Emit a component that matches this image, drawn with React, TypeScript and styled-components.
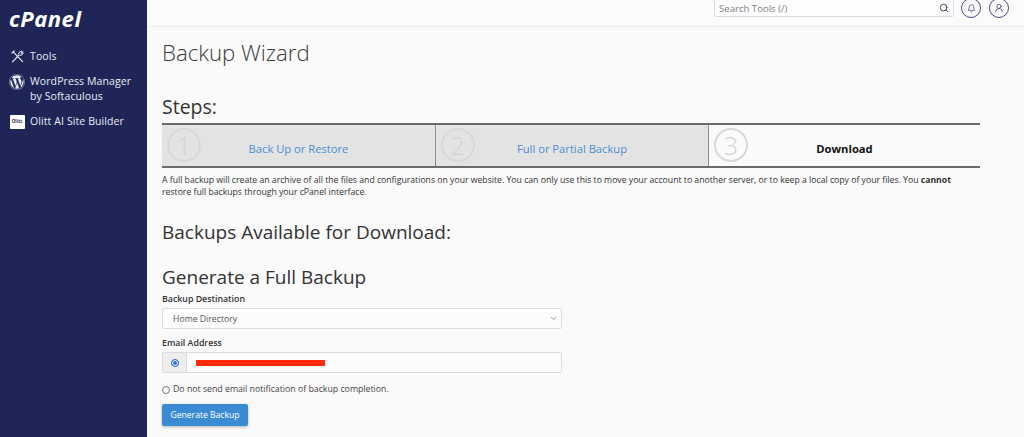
import { createGlobalStyle, styled } from "styled-components";
import { FaWordpress } from "react-icons/fa";
import { Search, Bell, UserRound, ChevronDown } from "lucide-react";

const GlobalStyle = createGlobalStyle`
    html, body {
        margin: 0;
        padding: 0;
        height: 100%;
        overflow: hidden;
        background: #fafafa;
    }
    * {
        box-sizing: border-box;
    }
`;

const Page = styled.div`
    display: flex;
    width: 1024px;
    height: 437px;
    overflow: hidden;
    font-family: "Open Sans", "Liberation Sans", sans-serif;
    color: #333;
    background: #fafafa;
`;

const Sidebar = styled.nav`
    flex: 0 0 147px;
    background: #1f2657;
    color: #e8eaf2;
    padding: 7px 0 0 9px;
    display: flex;
    flex-direction: column;
`;

const Logo = styled.div`
    font-style: italic;
    font-weight: 700;
    font-size: 22px;
    line-height: 22px;
    letter-spacing: 0.55px;
    color: #fff;
    margin-bottom: 20px;
`;

const NavItem = styled.div<{ $gap: number }>`
    display: flex;
    align-items: flex-start;
    gap: 5px;
    font-size: 10.5px;
    line-height: 15px;
    letter-spacing: 0.1px;
    margin-bottom: ${(props) => props.$gap}px;
`;

const NavIcon = styled.span`
    flex: 0 0 16px;
    height: 15px;
    display: flex;
    align-items: center;
    justify-content: center;
`;

const OlittBadge = styled.span`
    width: 15px;
    height: 14px;
    background: #fff;
    color: #1f2657;
    border-radius: 1px;
    font-size: 4.5px;
    font-weight: 700;
    display: flex;
    align-items: center;
    justify-content: center;
`;

const Column = styled.div`
    flex: 1;
    min-width: 0;
    display: flex;
    flex-direction: column;
`;

const TopBar = styled.header`
    height: 27px;
    flex: none;
    display: flex;
    justify-content: flex-end;
    align-items: flex-start;
    gap: 8px;
    padding-right: 15px;
    background: #fbfbfb;
    border-bottom: 1px solid #eeeeee;
`;

const SearchBox = styled.div`
    width: 240px;
    height: 18px;
    margin: -1px -1px 0 0;
    display: flex;
    align-items: center;
    justify-content: space-between;
    padding: 0 4px;
    border: 1px solid #d9dbe6;
    border-radius: 2px;
    background: #fdfdfd;
    font-size: 9.6px;
    color: #7d7f88;
`;

const RoundButton = styled.span`
    width: 20px;
    height: 20px;
    margin-top: -2px;
    border: 1px solid #464d7b;
    border-radius: 50%;
    display: flex;
    align-items: center;
    justify-content: center;
    color: #464d7b;
`;

const Main = styled.main`
    flex: 1;
    padding: 12px 44px 0 15px;
`;

const PageTitle = styled.h1`
    margin: 0 0 27px;
    font-size: 22.2px;
    line-height: 28px;
    font-weight: 300;
    color: #3a3a3a;
`;

const StepsTitle = styled.h2`
    margin: 0 0 3px;
    font-size: 19.5px;
    line-height: 26px;
    font-weight: 400;
    color: #333;
`;

const Stepper = styled.div`
    display: grid;
    grid-template-columns: 273px 273px 1fr;
    height: 45px;
    border-top: 2px solid #6b6b6b;
    border-bottom: 2px solid #6b6b6b;
`;

const Step = styled.div<{ $active?: boolean }>`
    position: relative;
    display: flex;
    align-items: center;
    justify-content: center;
    padding: 5px 0 0;
    font-size: 11.2px;
    font-weight: ${(props) => (props.$active ? 700 : 400)};
    color: ${(props) => (props.$active ? "#111" : "#4a90d0")};
    background: ${(props) => (props.$active ? "#fafafa" : "#e3e3e3")};
    & + & {
        border-left: 1px solid #8c8c8c;
    }
`;

const StepNumber = styled.span`
    position: absolute;
    left: 5px;
    top: 3px;
    width: 34px;
    height: 34px;
    border: 2px solid #d8d8d8;
    border-radius: 50%;
    display: flex;
    align-items: center;
    justify-content: center;
    font-size: 25px;
    font-weight: 300;
    color: #d2d2d2;
`;

const Intro = styled.p`
    margin: 6px 0 0;
    font-size: 8.68px;
    line-height: 12px;
    color: #333;
    white-space: nowrap;
`;

const SectionTitle = styled.h2<{ $gap: number }>`
    margin: ${(props) => props.$gap}px 0 0;
    font-size: 19px;
    line-height: 24px;
    font-weight: 500;
    color: #333;
`;

const Form = styled.form`
    width: 400px;
    display: flex;
    flex-direction: column;
    margin-top: 4px;
`;

const Label = styled.label`
    font-size: 8.8px;
    line-height: 13px;
    font-weight: 600;
    color: #333;
    margin-bottom: 2px;
`;

const Select = styled.div`
    height: 21px;
    display: flex;
    align-items: center;
    justify-content: space-between;
    padding: 0 3px 0 10px;
    border: 1px solid #dcdcdc;
    border-radius: 2px;
    background: #fcfcfc;
    font-size: 8.7px;
    color: #555;
    margin-bottom: 8px;
`;

const InputGroup = styled.div`
    height: 21px;
    display: flex;
    border: 1px solid #dcdcdc;
    border-radius: 2px;
    background: #fcfcfc;
    margin-bottom: 10px;
`;

const InputAddon = styled.span`
    width: 24px;
    display: flex;
    align-items: center;
    justify-content: center;
    background: #eeeeee;
    border-right: 1px solid #dcdcdc;
`;

const Redacted = styled.span`
    width: 129px;
    height: 6px;
    margin: 7px 0 0 9px;
    background: #ff2a0a;
`;

const Radio = styled.span<{ $checked?: boolean }>`
    width: 8px;
    height: 8px;
    flex: none;
    border-radius: 50%;
    border: 1px solid ${(props) => (props.$checked ? "#2f6fe0" : "#777")};
    background: ${(props) => (props.$checked ? "#2f6fe0" : "#fff")};
    box-shadow: ${(props) => (props.$checked ? "inset 0 0 0 1px #fff" : "none")};
`;

const RadioRow = styled.div`
    display: flex;
    align-items: center;
    gap: 3px;
    font-size: 8.75px;
    line-height: 13px;
    color: #444;
    margin-bottom: 8px;
`;

const SubmitButton = styled.button`
    align-self: flex-start;
    width: 86px;
    height: 22px;
    padding: 0;
    border: none;
    border-radius: 2px;
    background: #3b8bd4;
    box-shadow: 0 1px 3px rgba(0, 0, 0, 0.3);
    color: #fff;
    font-family: inherit;
    font-size: 8.6px;
`;

const ToolsIcon = () => (
    <svg width="13" height="13" viewBox="0 0 13 13" fill="none" stroke="#e8eaf2" strokeWidth="1.2" strokeLinecap="round">
        <path d="M1.5 11.8 L8 5" />
        <path d="M7.4 3.6 C8 1.8 10 0.9 11.4 1.3 L9.9 3 L10.4 3.8 L12.1 2.4 C12.3 4 10.8 5.8 9 5.3" strokeWidth="1" />
        <path d="M2.4 2.2 L11.6 11.6" />
        <path d="M1 3 L3.2 1" />
    </svg>
);

const App = () => {
    return (
        <Page>
            <GlobalStyle />
            <Sidebar>
                <Logo>cPanel</Logo>
                <NavItem $gap={10}>
                    <NavIcon>
                        <ToolsIcon />
                    </NavIcon>
                    <span>Tools</span>
                </NavItem>
                <NavItem $gap={10}>
                    <NavIcon>
                        <FaWordpress size={16} />
                    </NavIcon>
                    <span>
                        WordPress Manager
                        <br />
                        by Softaculous
                    </span>
                </NavItem>
                <NavItem $gap={0}>
                    <NavIcon>
                        <OlittBadge>Olitt</OlittBadge>
                    </NavIcon>
                    <span>Olitt AI Site Builder</span>
                </NavItem>
            </Sidebar>
            <Column>
                <TopBar>
                    <SearchBox>
                        <span>Search Tools (/)</span>
                        <Search size={10} color="#444b6e" strokeWidth={2.4} />
                    </SearchBox>
                    <RoundButton>
                        <Bell size={9} strokeWidth={2} />
                    </RoundButton>
                    <RoundButton>
                        <UserRound size={10} strokeWidth={2} />
                    </RoundButton>
                </TopBar>
                <Main>
                    <PageTitle>Backup Wizard</PageTitle>
                    <StepsTitle>Steps:</StepsTitle>
                    <Stepper>
                        <Step>
                            <StepNumber>1</StepNumber>
                            Back Up or Restore
                        </Step>
                        <Step>
                            <StepNumber>2</StepNumber>
                            Full or Partial Backup
                        </Step>
                        <Step $active>
                            <StepNumber>3</StepNumber>
                            Download
                        </Step>
                    </Stepper>
                    <Intro>
                        A full backup will create an archive of all the files and configurations on your website. You can
                        only use this to move your account to another server, or to keep a local copy of your files. You{" "}
                        <strong>cannot</strong>
                        <br />
                        restore full backups through your cPanel interface.
                    </Intro>
                    <SectionTitle $gap={22}>Backups Available for Download:</SectionTitle>
                    <SectionTitle $gap={21}>Generate a Full Backup</SectionTitle>
                    <Form>
                        <Label>Backup Destination</Label>
                        <Select>
                            Home Directory
                            <ChevronDown size={9} color="#777" />
                        </Select>
                        <Label>Email Address</Label>
                        <InputGroup>
                            <InputAddon>
                                <Radio $checked />
                            </InputAddon>
                            <Redacted />
                        </InputGroup>
                        <RadioRow>
                            <Radio />
                            Do not send email notification of backup completion.
                        </RadioRow>
                        <SubmitButton type="button">Generate Backup</SubmitButton>
                    </Form>
                </Main>
            </Column>
        </Page>
    );
};

export default App;
